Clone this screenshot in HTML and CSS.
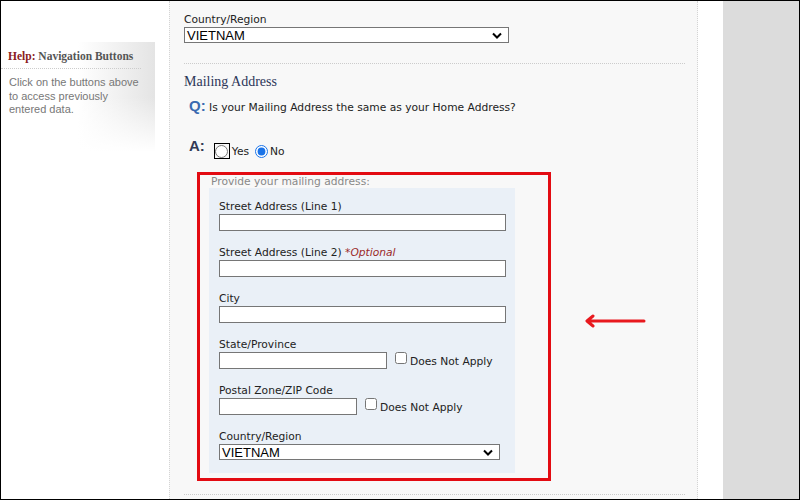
FILE: index.html
```html
<!DOCTYPE html>
<html>
<head>
<meta charset=utf-8>
<title>Mailing Address</title>
<link rel="stylesheet" href="styles.css">
</head>
<body>
<div class="page">

<div class="sidebar">
  <div class="help">
    <h3><span class="help-key">Help:</span> Navigation Buttons</h3>
    <p>Click on the buttons above to access previously entered data.</p>
  </div>
</div>

<div class="main">
  <label class="field-label">Country/Region</label>
  <div class="select wide">
    <span>VIETNAM</span>
    <svg width="10" height="7" viewBox="0 0 10 7"><path d="M1 1.5 L5 5.5 L9 1.5" fill="none" stroke="#000" stroke-width="2"/></svg>
  </div>

  <hr class="dots">

  <h2>Mailing Address</h2>
  <div class="question"><span class="q">Q:</span> Is your Mailing Address the same as your Home Address?</div>

  <div class="answer">
    <span class="a">A:</span>
    <span class="focus"><input type="radio" name="same" id="yes"></span><label for="yes">Yes</label>
    <input type="radio" name="same" id="no" checked><label for="no">No</label>
  </div>

  <div class="highlight">
    <div class="provide">Provide your mailing address:</div>
    <div class="panel">
      <div class="row">
        <label class="field-label">Street Address (Line 1)</label>
        <input type="text" class="text long">
      </div>
      <div class="row">
        <label class="field-label">Street Address (Line 2) <em>*Optional</em></label>
        <input type="text" class="text long">
      </div>
      <div class="row">
        <label class="field-label">City</label>
        <input type="text" class="text long">
      </div>
      <div class="row">
        <label class="field-label">State/Province</label>
        <div class="inline">
          <input type="text" class="text state">
          <input type="checkbox" id="state_na"><label for="state_na">Does Not Apply</label>
        </div>
      </div>
      <div class="row">
        <label class="field-label">Postal Zone/ZIP Code</label>
        <div class="inline">
          <input type="text" class="text postal">
          <input type="checkbox" id="zip_na"><label for="zip_na">Does Not Apply</label>
        </div>
      </div>
      <div class="row last">
        <label class="field-label">Country/Region</label>
        <div class="select narrow">
          <span>VIETNAM</span>
          <svg width="10" height="7" viewBox="0 0 10 7"><path d="M1 1.5 L5 5.5 L9 1.5" fill="none" stroke="#000" stroke-width="2"/></svg>
        </div>
      </div>
    </div>
  </div>

  <hr class="dots bottom">

  <svg class="arrow" width="62" height="14" viewBox="0 0 62 14"><path d="M60 7 H4 M9 2 L3 7 L9 12" fill="none" stroke="#e8191e" stroke-width="3" stroke-linecap="round" stroke-linejoin="round"/></svg>
</div>

<div class="gap"></div>
<div class="gutter"></div>

</div>
</body>
</html>
```

FILE: styles.css
```css
html, body
{
	margin:0;
	padding:0;
	background-color:#fff;
}
.page
{
	width:800px;
	height:500px;
	box-sizing:border-box;
	border:1px solid #000;
	display:flex;
	overflow:hidden;
	font-family:"DejaVu Sans", Verdana, sans-serif;
	font-size:10.7px;
	color:#222;
}
.sidebar
{
	width:168px;
	flex:none;
	background-color:#fff;
}
.help
{
	margin-top:41px;
	width:154px;
	height:110px;
	background:linear-gradient(to bottom, rgba(255,255,255,0) 50%, #fff),
		linear-gradient(to right, #fff 50%, #e4e4e4);
}
.help h3
{
	margin:0;
	padding:8px 0 6px 7px;
	font-family:"Liberation Serif", "Times New Roman", serif;
	font-size:11.5px;
	font-weight:bold;
	color:#555;
	border-bottom:1px dotted #ccc;
	width:133px;
}
.help-key { color:#8b2020; }
.help p
{
	margin:7px 0 0 8px;
	font-family:"Liberation Sans", Arial, sans-serif;
	font-size:11px;
	line-height:13.5px;
	color:#777;
	width:130px;
}
.main
{
	width:529px;
	flex:none;
	position:relative;
	background-color:#f8f8f8;
	border-left:1px dotted #d4d4d4;
	border-right:1px dotted #d4d4d4;
	padding:12px 0 0 14px;
	box-sizing:border-box;
}
.gap
{
	width:25px;
	flex:none;
	background-color:#fff;
}
.gutter
{
	flex:1;
	background-color:#dcdcdc;
}
.field-label
{
	display:block;
	line-height:14px;
}
.select
{
	display:flex;
	align-items:center;
	justify-content:space-between;
	box-sizing:border-box;
	height:16px;
	background-color:#fff;
	border:1px solid #767676;
	padding:0 6px 0 2px;
	font-family:"Liberation Sans", Arial, sans-serif;
	font-size:13px;
	color:#000;
}
.select.wide { width:325px; }
.select.narrow { width:281px; }
hr.dots
{
	margin:20px 0 0 0;
	width:501px;
	height:0;
	border:none;
	border-top:1px dotted #ccc;
}
h2
{
	margin:9px 0 0 0;
	font-family:"Liberation Serif", "Times New Roman", serif;
	font-size:14px;
	font-weight:normal;
	line-height:18px;
	color:#2c3658;
}
.question
{
	margin:7px 0 0 5px;
	line-height:16px;
}
.q
{
	font-family:"Liberation Sans", Arial, sans-serif;
	font-size:15px;
	font-weight:bold;
	color:#3a6ab0;
}
.answer
{
	display:flex;
	align-items:center;
	margin:25px 0 0 5px;
	height:20px;
}
.a
{
	font-family:"Liberation Sans", Arial, sans-serif;
	font-size:15px;
	font-weight:bold;
	color:#333a55;
	margin-right:9px;
	align-self:flex-start;
	margin-top:-4px;
}
.answer input[type="radio"]
{
	margin:0;
	width:13px;
	height:13px;
	accent-color:#1a73e8;
}
.focus
{
	display:inline-flex;
	align-items:center;
	justify-content:center;
	width:16px;
	height:16px;
	border:1.5px solid #000;
	box-sizing:border-box;
}
.answer label { margin:0 6px 0 2px; }
.highlight
{
	margin:11px 0 0 13px;
	width:354px;
	box-sizing:border-box;
	border:3px solid #e30b12;
	padding:0 0 5px 9px;
}
.provide
{
	color:#888;
	line-height:13px;
	padding-left:2px;
}
.panel
{
	width:306px;
	box-sizing:border-box;
	background-color:#eaf0f7;
	padding:12px 0 13px 10px;
}
.row { margin-bottom:15px; }
.row.last { margin-bottom:0; }
.row em { color:#9b2a2a; }
input.text
{
	display:block;
	margin:0;
	height:17px;
	box-sizing:border-box;
	border:1px solid #767676;
	background-color:#fff;
}
.text.long { width:287px; }
.text.state { width:168px; }
.text.postal { width:138px; }
.inline
{
	display:flex;
	align-items:center;
}
.inline input[type="checkbox"]
{
	margin:0 3px 0 8px;
	width:12px;
	height:12px;
	align-self:flex-start;
}
.inline label { margin-top:1px; }
hr.dots.bottom { margin-top:13px; }
.arrow
{
	position:absolute;
	left:414px;
	top:313px;
}
```
